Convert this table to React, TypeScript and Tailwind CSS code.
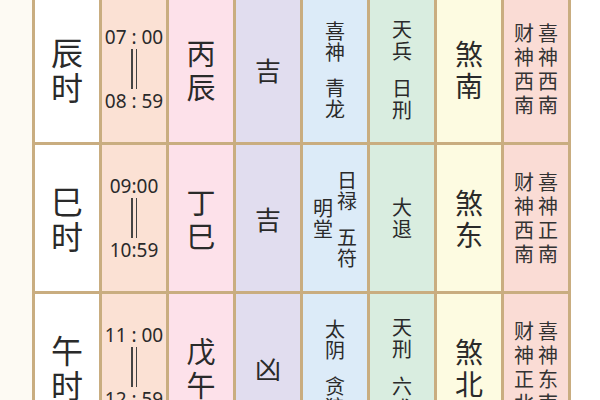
import React from "react";

type Cols = string[][]; // columns (left to right), each = groups

const rows = [
  {
    shi: "辰时",
    t1: "07 : 00",
    t2: "08 : 59",
    gz: "丙辰",
    jx: "吉",
    js: [["喜神", "青龙"]] as Cols,
    xs: [["天兵", "日刑"]] as Cols,
    sha: "煞南",
    cs: [["财神西南"], ["喜神西南"]] as Cols,
  },
  {
    shi: "巳时",
    t1: "09:00",
    t2: "10:59",
    gz: "丁巳",
    jx: "吉",
    js: [["明堂"], ["日禄", "五符"]] as Cols,
    xs: [["大退"]] as Cols,
    sha: "煞东",
    cs: [["财神西南"], ["喜神正南"]] as Cols,
  },
  {
    shi: "午时",
    t1: "11 : 00",
    t2: "12 : 59",
    gz: "戊午",
    jx: "凶",
    js: [["太阴", "贪狼"]] as Cols,
    xs: [["天刑", "六戊"]] as Cols,
    sha: "煞北",
    cs: [["财神正北"], ["喜神东南"]] as Cols,
  },
];

const cjk = { fontFamily: '"Noto Sans CJK SC", "Noto Sans", sans-serif' };

function Stack({ text, cls }: { text: string; cls: string }) {
  return (
    <div className={"flex flex-col items-center " + cls}>
      {text.split("").map((c, i) => (
        <span key={i}>{c}</span>
      ))}
    </div>
  );
}

function Multi({ cols, leading, groupGap }: { cols: Cols; leading: string; groupGap: string }) {
  return (
    <div className="flex flex-row items-center justify-center gap-[4px]">
      {cols.map((groups, ci) => (
        <div key={ci} className={"flex flex-col items-center " + groupGap}>
          {groups.map((g, gi) => (
            <Stack key={gi} text={g} cls={leading} />
          ))}
        </div>
      ))}
    </div>
  );
}

function Lines() {
  return (
    <div className="flex flex-row gap-[3px] h-[40px] my-[3px]">
      <div className="w-[1.5px] h-full bg-[#444]" />
      <div className="w-[1.5px] h-full bg-[#444]" />
    </div>
  );
}

export default function App() {
  return (
    <div className="w-[600px] h-[400px] overflow-hidden bg-white flex flex-row" style={cjk}>
      <div className="w-[32px] h-full bg-[#fdfaf3]" />
      <div className="-mt-[7px] self-start grid grid-cols-[repeat(8,64px)] grid-rows-[repeat(3,146px)] gap-[3px] p-[3px] bg-[#c9ad80] text-[#2a2a2a]">
        {rows.map((r, i) => (
          <React.Fragment key={i}>
            <div className="bg-white flex items-center justify-center">
              <Stack text={r.shi} cls="text-[32px] leading-[35px]" />
            </div>
            <div className="bg-[#fbe1d4] flex flex-col items-center justify-center text-[19px] leading-[18px]" style={{ fontFamily: '"Noto Sans", sans-serif' }}>
              <span className="whitespace-pre">{r.t1}</span>
              <Lines />
              <span className="whitespace-pre">{r.t2}</span>
            </div>
            <div className="bg-[#fde1ea] flex items-center justify-center">
              <Stack text={r.gz} cls="text-[29px] leading-[34px]" />
            </div>
            <div className="bg-[#e1ddef] flex items-center justify-center">
              <span className="text-[26px]">{r.jx}</span>
            </div>
            <div className="bg-[#dcebf8] flex items-center justify-center text-[20px]">
              <Multi cols={r.js} leading="leading-[21px]" groupGap="gap-[15px]" />
            </div>
            <div className="bg-[#d9ede0] flex items-center justify-center text-[20px]">
              <Multi cols={r.xs} leading="leading-[22px]" groupGap="gap-[15px]" />
            </div>
            <div className="bg-[#fdfbe1] flex items-center justify-center">
              <Stack text={r.sha} cls="text-[28px] leading-[32px]" />
            </div>
            <div className="bg-[#fadcd5] flex items-center justify-center text-[20px] text-[#333]">
              <Multi cols={r.cs} leading="leading-[24px]" groupGap="gap-0" />
            </div>
          </React.Fragment>
        ))}
      </div>
      <div className="flex-1 h-full bg-white" />
    </div>
  );
}
